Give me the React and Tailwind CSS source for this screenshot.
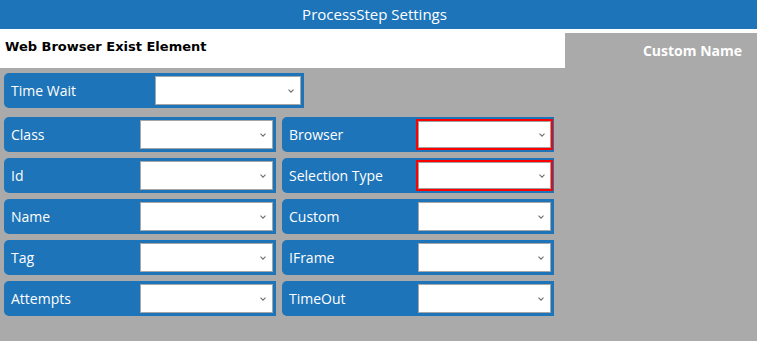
import React from 'react';

const Chevron = () => (
  <svg width="6" height="4" viewBox="0 0 6 4" className="absolute right-[6px] top-1/2 -translate-y-1/2">
    <path d="M0.5 0.7 L3 3.2 L5.5 0.7" fill="none" stroke="#707070" strokeWidth="1.1" />
  </svg>
);

const Select = ({ invalid, className }) => (
  <div
    className={
      'relative bg-white h-[29px] ' +
      (invalid ? 'border-2 border-[#ff0000] outline outline-1 outline-[#a0a0a0] -outline-offset-3 ' : 'border border-[#a6a6a6] ') +
      className
    }
  >
    <Chevron />
  </div>
);

const Field = ({ label, invalid }) => (
  <div className="flex items-center h-[35px] w-[272px] bg-[#1e74b8] rounded-l-[5px] pr-[3px]">
    <span className="flex-1 pl-[7px] text-white text-[14px]">{label}</span>
    {invalid ? (
      <Select invalid className="w-[137px] h-[31px] mr-[-2px]" />
    ) : (
      <Select className="w-[133px]" />
    )}
  </div>
);

const rows = [
  ['Class', 'Browser', true],
  ['Id', 'Selection Type', true],
  ['Name', 'Custom', false],
  ['Tag', 'IFrame', false],
  ['Attempts', 'TimeOut', false],
];

export default function App() {
  return (
    <div className="w-[757px] h-[341px] bg-[#aaaaaa] flex flex-col" style={{ fontFamily: '"Open Sans", "Noto Sans", sans-serif' }}>
      <div className="h-[29px] bg-[#1e74b8] flex items-center justify-center text-white text-[15px] pr-[8px]">
        ProcessStep Settings
      </div>
      <div className="h-[4px] bg-white" />
      <div className="flex h-[35px]">
        <div className="w-[565px] bg-white pl-[5px] pt-[4px] text-[13px] font-bold text-black" style={{ fontFamily: '"DejaVu Sans", Verdana, sans-serif' }}>
          Web Browser Exist Element
        </div>
        <div className="flex-1 flex items-center justify-end pr-[15px] pb-[1px] text-white font-bold text-[14px]">
          Custom Name
        </div>
      </div>
      <div className="pl-[4px] pt-[5px] flex flex-col gap-[9px]">
        <div className="flex items-center h-[35px] w-[300px] bg-[#1e74b8] rounded-l-[5px] pr-[3px]">
          <span className="flex-1 pl-[7px] text-white text-[14px]">Time Wait</span>
          <Select className="w-[146px]" />
        </div>
        <div className="flex flex-col gap-[6px]">
          {rows.map(([l, r, inv]) => (
            <div key={l} className="flex gap-[6px]">
              <Field label={l} />
              <Field label={r} invalid={inv} />
            </div>
          ))}
        </div>
      </div>
    </div>
  );
}
